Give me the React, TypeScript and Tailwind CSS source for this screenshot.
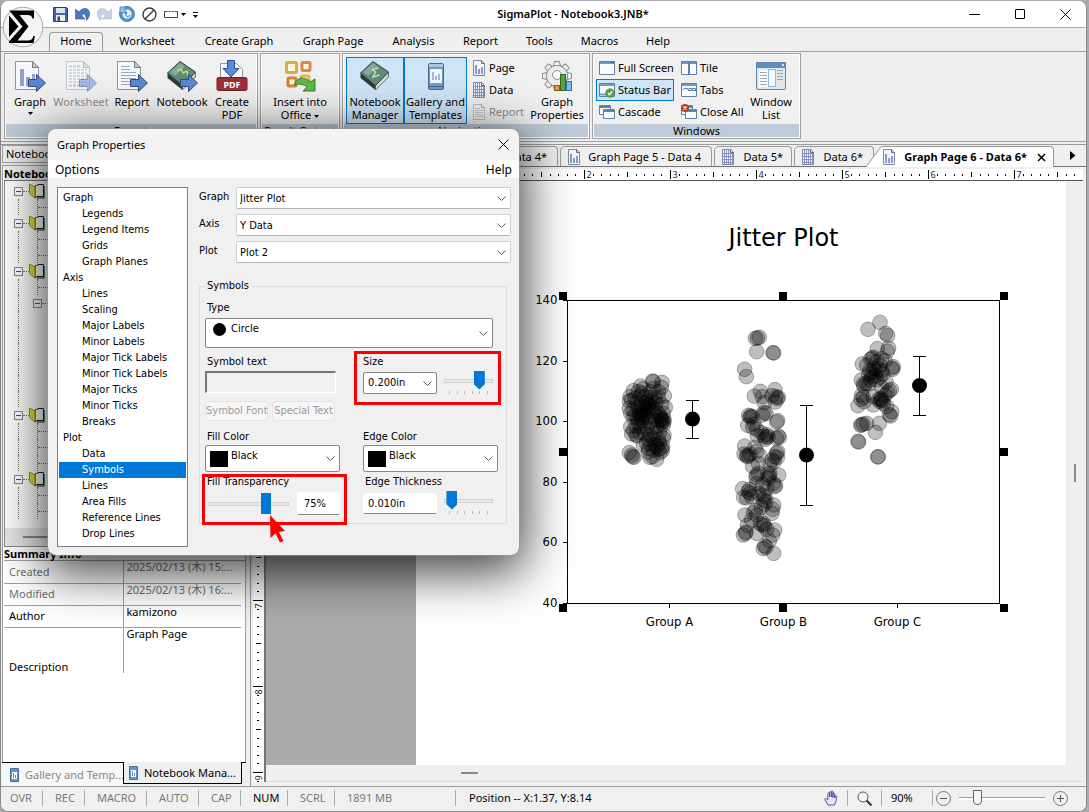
import type { ReactNode } from 'react';

/* ---------- small drawings ---------- */

function Sheet({ kind, faded }: { kind: 'bars' | 'grid' | 'lines'; faded?: boolean }) {
  return (
    <g opacity={faded ? 0.45 : 1}>
      <path d="M1.5 1.5h17l6 6v22h-23z" fill="#f7f8fb" stroke="#8b93a8" />
      <path d="M18.500 1.500v6h6z" fill="#c9cbd2" stroke="#777" />
      {kind === 'bars' && <path d="M6 9h4v17h-4zM12 17h4v9h-4zM18 14h3v12h-3z" fill="#93a1cc" />}
      {kind === 'grid' && (
        <g>
          <path d="M4 5h12v4h6v18h-18z" fill="#a9b2d2" />
          <path d="M4 8.500h18M4 11.500h18M4 14.500h18M4 17.500h18M4 20.500h18M4 23.500h18M7.500 5v22M11.500 5v22M15.500 5v22M19.500 8v19" stroke="#fff" />
        </g>
      )}
      {kind === 'lines' && (
        <path d="M5 6.500h9M5 9.500h9M5 12.500h15M5 15.500h15M5 18.500h15M5 21.500h15M5 24.500h9" stroke="#9aa6c6" />
      )}
    </g>
  );
}

function BlueArrow({ faded }: { faded?: boolean }) {
  return (
    <path
      d="M14.500 19.500h8v-5l9 8.500-9 8.500v-5h-8z"
      fill="#5c87cf"
      stroke="#2c4a80"
      strokeWidth="1"
      opacity={faded ? 0.5 : 1}
      strokeLinejoin="round"
    />
  );
}

function ExportIcon({ kind, faded }: { kind: 'bars' | 'grid' | 'lines'; faded?: boolean }) {
  return (
    <svg className="size-8" viewBox="0 0 32 32" aria-hidden="true">
      <Sheet kind={kind} faded={faded} />
      <BlueArrow faded={faded} />
    </svg>
  );
}

function BookIcon({ arrow }: { arrow?: boolean }) {
  return (
    <svg className="size-8" viewBox="0 0 32 32" aria-hidden="true">
      <path d="M1.500 13l15 12v5l-15-12z" fill="#2b3a36" />
      <path d="M16.500 25l13-13v5l-13 13z" fill="#d4d8d6" stroke="#444" strokeWidth=".7" />
      <path d="M1.500 13L14 1.500l15.500 10.500-13 13.500z" fill="#5f8a76" stroke="#33463f" />
      <path d="M4 12L14 3l5 3.500-10 9.500z" fill="#86a898" />
      {arrow ? (
        <path d="M11 11l4-2 2 4 4-2 1 5" fill="none" stroke="#b8e070" strokeWidth="1.500" />
      ) : (
        <path d="M19.500 8l-6 1.500 3 2.500-2.500 5 6.500-2" fill="none" stroke="#c4dcae" strokeWidth="1.500" />
      )}
      {arrow && <BlueArrow />}
    </svg>
  );
}

function PdfIcon() {
  return (
    <svg className="size-8" viewBox="0 0 32 32" aria-hidden="true">
      <path d="M4.500 3.500h16l6 6v10h-22z" fill="#f7f8fb" stroke="#9098a8" />
      <path d="M11.500 0.500h7v8h4.500l-8 8.500-8-8.500h4.500z" fill="#5a8bd6" stroke="#2c4f90" />
      <rect x="1" y="17.500" width="30" height="13" rx="1.500" fill="#9c3038" stroke="#74212a" />
      <text x="16" y="27.500" textAnchor="middle" fontSize="9" fontWeight="700" fill="#fff">PDF</text>
    </svg>
  );
}

function OfficeIcon() {
  return (
    <svg className="size-8" viewBox="0 0 32 32" aria-hidden="true">
      <g fill="#fff6dc" strokeWidth="3">
        <rect x="2.500" y="2.500" width="10" height="10" rx="1" stroke="#dcae3c" />
        <rect x="18" y="2.500" width="8" height="8" rx="1" stroke="#d98a44" />
        <rect x="4" y="18" width="8" height="8" rx="1" stroke="#dc7e33" />
        <rect x="17" y="16" width="8" height="8" rx="1" stroke="#e3b94a" />
      </g>
      <path d="M10 25c3-8 11-9 16-3l5-3v12h-12l4-4c-4-4-8-3-13-2z" fill="#62b64c" stroke="#33802c" />
    </svg>
  );
}

function PhoneIcon() {
  return (
    <svg className="size-8" viewBox="0 0 32 32" aria-hidden="true">
      <rect x="8.500" y="3.500" width="15" height="26" rx="1.500" fill="#6f9ac4" stroke="#44698f" />
      <rect x="9" y="4" width="14" height="3" fill="#a5c4de" />
      <rect x="10" y="9" width="12" height="14" fill="#f2f6fb" />
      <path d="M12 12h2v8h-2zM15 16h2v4h-2zM18 14h2v6h-2z" fill="#a9b6d8" />
      <path d="M9 26.500h14" stroke="#3f6288" />
    </svg>
  );
}

function GearIcon() {
  const teeth = [0, 45, 90, 135, 180, 225, 270, 315];
  return (
    <svg className="size-8" viewBox="0 0 32 32" aria-hidden="true">
      <g fill="#ececec" stroke="#8c8c8c">
        {teeth.map((a) => (
          <path key={a} d="M12.500 6l1-4.500h5l1 4.500z" transform={`rotate(${a} 16 16)`} />
        ))}
        <circle cx="16" cy="16" r="10.500" />
      </g>
      <circle cx="16" cy="16" r="9.800" fill="#ececec" />
      <circle cx="16" cy="15" r="4.500" fill="#fafafa" stroke="#8c8c8c" />
      <rect x="13.500" y="25.500" width="5" height="5" fill="#d99a4a" stroke="#8c5a20" />
      <rect x="19.500" y="14.500" width="5" height="16" fill="#5ba13f" stroke="#2d6b1e" />
      <rect x="25.500" y="21.500" width="5" height="9" fill="#7db8e6" stroke="#3b76a8" />
    </svg>
  );
}

function WindowListIcon() {
  return (
    <svg className="size-8" viewBox="0 0 32 32" aria-hidden="true">
      <rect x="1.500" y="2.500" width="29" height="27" rx="1.500" fill="#dfe7ef" stroke="#5f86ad" />
      <rect x="1" y="2" width="30" height="6" fill="#5d8dbd" />
      <path d="M27 4h2v2h-2z" fill="#dbe9f5" />
      <rect x="4" y="10" width="17" height="17" fill="#fff" />
      <path d="M5 12.500h7M5 15.500h7M5 18.500h7M5 21.500h7M5 24.500h7M22 10.500h6M22 13.500h6M22 16.500h6M22 19.500h6" stroke="#9aa9b8" />
      <rect x="13.500" y="9.500" width="7" height="17" fill="#f5faff" stroke="#8fbbe0" />
    </svg>
  );
}

function SmallSheet({ kind, faded }: { kind: 'bars' | 'grid' | 'lines'; faded?: boolean }) {
  return (
    <svg className="h-4 w-3.5 flex-none" viewBox="0 0 14 16" aria-hidden="true" opacity={faded ? 0.5 : 1}>
      <path d="M1.500 .5h8l3 3v12h-11z" fill="#f4f6fb" stroke="#7d89a5" />
      <path d="M9.500 .5v3h3" fill="none" stroke="#666" />
      {kind === 'bars' && <path d="M3 5h2v9h-2zM6 9h2v5h-2zM9 7h2v7h-2z" fill="#8c9acb" />}
      {kind === 'grid' && (
        <path d="M3.500 1v14M5.500 1v14M7.500 1v14M9.500 3v12M11.500 4v11M2 4.500h10M2 7.500h10M2 10.500h10M2 13.500h10" stroke="#7e8bc0" strokeWidth=".9" />
      )}
      {kind === 'lines' && <path d="M3 4.500h5M3 6.500h8M3 8.500h8M3 10.500h8M3 12.500h8" stroke="#999" />}
    </svg>
  );
}

type WinKind = 'full' | 'status' | 'cascade' | 'tile' | 'tabs' | 'close';

function WinIcon({ kind }: { kind: WinKind }) {
  return (
    <svg className="size-4 flex-none" viewBox="0 0 16 16" aria-hidden="true">
      {(kind === 'cascade' || kind === 'close') && (
        <g fill="#fbfcfe" stroke="#5c84ab">
          <path d="M.5 1.500h11v9h-11z" />
          <path d="M1 3h10" strokeWidth="2" />
          <path d="M4.500 5.500h11v9h-11z" />
          <path d="M5 7h10" strokeWidth="2" />
        </g>
      )}
      {kind === 'close' && (
        <g>
          <circle cx="4" cy="4" r="4" fill="#b0442c" />
          <path d="M2.500 2.500l3 3m0-3l-3 3" stroke="#fff" strokeWidth="1.200" />
        </g>
      )}
      {(kind === 'full' || kind === 'status' || kind === 'tile' || kind === 'tabs') && (
        <g>
          <path d="M.5 1.500h15v13h-15z" fill="#fbfcfe" stroke="#5c84ab" />
          <path d="M1 3h14" stroke="#6f9ac4" strokeWidth="2" />
        </g>
      )}
      {kind === 'full' && <path d="M12 2.500h1M14 2.500h1" stroke="#1d3f66" />}
      {kind === 'tile' && <path d="M8 2v12" stroke="#5c84ab" strokeWidth="2" />}
      {kind === 'tabs' && <path d="M1 8.500l2-2h4v2M8 8.500v-2h3v2M11.500 8.500v-2h3v2M7 8.500h8" fill="none" stroke="#5c84ab" />}
      {kind === 'status' && (
        <g>
          <path d="M1 12.500h14" stroke="#6f9ac4" strokeWidth="2" />
          <circle cx="11" cy="11" r="4.300" fill="#5ea33b" stroke="#3a7a22" strokeWidth=".6" />
          <path d="M9 11l1.500 1.800 2.700-3.300" fill="none" stroke="#fff" strokeWidth="1.300" />
        </g>
      )}
    </svg>
  );
}

function Logo() {
  return (
    <svg className="size-[42px]" viewBox="0 0 42 42" aria-label="SigmaPlot" role="img">
      <circle cx="21" cy="21" r="19.800" fill="#f4f4f4" stroke="#a8a8a8" />
      <path d="M7 4.500h25v8h-1.500c-.5-2.500-2-3.500-5-3.500H17.500l9 11.500-11 14H26c3 0 4.500-1.500 5.500-4.500H33l-1.500 7H7v-1.500L20.500 20.500 8.500 6z" fill="#000" />
      <path d="M7 9.500v21.500l9.500-10.500z" fill="#000" />
    </svg>
  );
}

function Chevron() {
  return (
    <svg className="pointer-events-none h-[5px] w-[9px]" viewBox="0 0 9 5" aria-hidden="true">
      <path d="M.5 .5l4 4 4-4" fill="none" stroke="#5a5a5a" />
    </svg>
  );
}

function Caret() {
  return (
    <svg className="inline h-[3px] w-[5px] flex-none align-middle" viewBox="0 0 5 3" aria-hidden="true">
      <path d="M0 0h5L2.500 3z" />
    </svg>
  );
}

/* ---------- ribbon ---------- */

function Group({ label, children, className }: { label: string; children: ReactNode; className: string }) {
  return (
    <section className={`flex h-[86px] flex-none flex-col border border-[#a0a0a0] bg-[#f0f0f0] p-px outline-1 -outline-offset-2 outline-white ${className}`}>
      <div className="flex flex-1 pt-0.5">{children}</div>
      <div className="h-3.5 whitespace-nowrap bg-[#bfcbd9] text-center leading-[14px]">{label}</div>
    </section>
  );
}

function BigButton({ icon, lines, width, active, disabled, caret }: {
  icon: ReactNode; lines: string[]; width: string; active?: boolean; disabled?: boolean; caret?: 'below' | 'inline';
}) {
  return (
    <button
      disabled={disabled}
      className={`flex h-[67px] flex-none flex-col items-center whitespace-nowrap border pt-0.5 leading-[13px] ${width} ${
        active ? 'border-[#0078d7] bg-[#cfe4f6]' : 'border-transparent'
      } ${disabled ? 'text-[#8a8a8a]' : ''}`}
    >
      {icon}
      <span className="pt-[3px]">{lines[0]}</span>
      {lines[1] && <span>{lines[1]}{caret === 'inline' && <> <Caret /></>}</span>}
      {caret === 'below' && <span className="flex h-2.5 items-center"><Caret /></span>}
    </button>
  );
}

function SmallButton({ icon, text, active, disabled }: { icon: ReactNode; text: string; active?: boolean; disabled?: boolean }) {
  return (
    <button
      disabled={disabled}
      className={`flex h-[22px] items-center gap-[3px] whitespace-nowrap border px-0.5 ${
        active ? 'border-[#0078d7] bg-[#cfe4f6]' : 'border-transparent'
      } ${disabled ? 'text-[#8a8a8a]' : ''}`}
    >
      {icon}
      {text}
    </button>
  );
}

const menu: [string, string][] = [
  ['Worksheet', 'w-[86px]'], ['Create Graph', 'w-[98px]'], ['Graph Page', 'w-[90px]'], ['Analysis', 'w-[71px]'],
  ['Report', 'w-[63px]'], ['Tools', 'w-[55px]'], ['Macros', 'w-[65px]'], ['Help', 'w-[52px]'],
];

function TitleBar() {
  return (
    <header className="flex h-[27px] flex-none items-center border-b border-[#a8a8a8] bg-white pl-[52px]">
      <div className="flex w-[150px] items-center gap-[7px]">
        <svg className="size-[15px]" viewBox="0 0 15 15" aria-hidden="true">
          <path d="M.5 .5h13l1 1v13h-14z" fill="#4866a4" stroke="#293f70" />
          <rect x="3" y="1" width="9" height="5" fill="#dce4f2" />
          <rect x="3" y="8" width="9" height="6" fill="#e9edf5" />
          <rect x="4.500" y="9.500" width="2.500" height="4.500" fill="#33497a" />
        </svg>
        <svg className="h-[14px] w-[15px]" viewBox="0 0 15 14" aria-hidden="true">
          <path d="M.5 2v10h9.500L7 9c1-3.500 4-3 4.500 4.500C16 9 15.500 2 10.500 1.500 8 1.300 5.500 2.500 4 5z" fill="#4a78bd" stroke="#2b4f8c" strokeWidth=".6" />
        </svg>
        <svg className="h-[14px] w-[15px]" viewBox="0 0 15 14" aria-hidden="true">
          <path d="M14.500 2v10H5L8 9C7 5.500 4 6 3.500 13.500-1 9-.5 2 4.500 1.500 7 1.300 9.500 2.500 11 5z" fill="#c5d3e8" stroke="#a5b7d3" strokeWidth=".6" />
        </svg>
        <svg className="size-4" viewBox="0 0 16 16" aria-hidden="true">
          <circle cx="8" cy="8" r="6" fill="#e8f2fb" stroke="#5b98cd" strokeWidth="3" />
          <circle cx="8" cy="8" r="7.500" fill="none" stroke="#2f6ca8" strokeWidth=".8" />
          <path d="M1 1h7l-2.500 3L8 7H1z" fill="#8fc0e8" stroke="#2f6ca8" strokeWidth=".7" />
          <path d="M7 6v3c0 2 3 2 4 0" fill="none" stroke="#2f6ca8" />
        </svg>
        <svg className="size-[15px]" viewBox="0 0 15 15" aria-hidden="true">
          <circle cx="7.500" cy="7.500" r="6.500" fill="none" stroke="#3c3c3c" strokeWidth="1.400" />
          <path d="M3 12l9-9" stroke="#3c3c3c" strokeWidth="1.400" />
        </svg>
        <svg className="h-[9px] w-[37px]" viewBox="0 0 37 9" aria-hidden="true">
          <path d="M.5 1.500h13v6h-13z" fill="#fff" stroke="#444" />
          <path d="M4 1v1M7 1v1M10 1v1" stroke="#fff" />
          <path d="M17 3h5l-2.500 3z" />
          <path d="M29 2.500h5" stroke="#000" />
          <path d="M29 5h5l-2.500 3z" />
        </svg>
      </div>
      <h1 className="flex-1 pr-2.5 text-center font-semibold">SigmaPlot - Notebook3.JNB*</h1>
      <div className="flex w-[133px] items-center gap-[35px] pl-4">
        <button aria-label="Minimize" className="h-px w-[11px] bg-black" />
        <button aria-label="Maximize" className="size-[10px] rounded-[1px] border border-black" />
        <button aria-label="Close">
          <svg className="size-[11px]" viewBox="0 0 11 11"><path d="M.5 .5l10 10m0-10l-10 10" stroke="#000" /></svg>
        </button>
      </div>
    </header>
  );
}

function Ribbon() {
  return (
    <div className="flex h-[91px] flex-none gap-0.5 border-y border-[#a0a0a0] bg-[#efefef] px-[3px] pt-px">
      <Group label="Export" className="w-[254px]">
        <BigButton icon={<ExportIcon kind="bars" />} lines={['Graph']} width="w-[48px]" caret="below" />
        <BigButton icon={<ExportIcon kind="grid" faded />} lines={['Worksheet']} width="w-[54px]" disabled />
        <BigButton icon={<ExportIcon kind="lines" />} lines={['Report']} width="w-[48px]" />
        <BigButton icon={<BookIcon arrow />} lines={['Notebook']} width="w-[52px]" />
        <BigButton icon={<PdfIcon />} lines={['Create', 'PDF']} width="w-[48px]" />
      </Group>
      <Group label="Result Output" className="w-[80px]">
        <BigButton icon={<OfficeIcon />} lines={['Insert into', 'Office']} width="w-[76px]" caret="inline" />
      </Group>
      <Group label="Navigation" className="w-[248px]">
        <div className="flex pl-0.5">
          <BigButton icon={<BookIcon />} lines={['Notebook', 'Manager']} width="w-[58px]" active />
          <BigButton icon={<PhoneIcon />} lines={['Gallery and', 'Templates']} width="w-[63px]" active />
        </div>
        <div className="flex w-[62px] flex-col pl-0.5">
          <SmallButton icon={<SmallSheet kind="bars" />} text="Page" />
          <SmallButton icon={<SmallSheet kind="grid" />} text="Data" />
          <SmallButton icon={<SmallSheet kind="lines" faded />} text="Report" disabled />
        </div>
        <BigButton icon={<GearIcon />} lines={['Graph', 'Properties']} width="w-[56px]" />
      </Group>
      <Group label="Windows" className="w-[209px]">
        <div className="flex w-[84px] flex-col items-start pl-0.5">
          <SmallButton icon={<WinIcon kind="full" />} text="Full Screen" />
          <SmallButton icon={<WinIcon kind="status" />} text="Status Bar" active />
          <SmallButton icon={<WinIcon kind="cascade" />} text="Cascade" />
        </div>
        <div className="flex w-[66px] flex-col items-start">
          <SmallButton icon={<WinIcon kind="tile" />} text="Tile" />
          <SmallButton icon={<WinIcon kind="tabs" />} text="Tabs" />
          <SmallButton icon={<WinIcon kind="close" />} text="Close All" />
        </div>
        <BigButton icon={<WindowListIcon />} lines={['Window', 'List']} width="w-[54px]" />
      </Group>
    </div>
  );
}

/* ---------- notebook panel ---------- */

type TreeRow = 'book' | 'child' | 'last' | 'sub' | 'gap';
const tree: TreeRow[] = [
  'book', 'last', 'book', 'child', 'last', 'book', 'child', 'sub', 'gap', 'gap', 'gap',
  'gap', 'gap', 'gap', 'book', 'child', 'child', 'last', 'book', 'child', 'last',
];

function Minus() {
  return (
    <span className="flex size-[9px] flex-none items-center justify-center border border-[#8a8a8a] bg-white">
      <span className="h-px w-[5px] bg-[#3a4f9a]" />
    </span>
  );
}

function TreeLine({ kind }: { kind: TreeRow }) {
  return (
    <li className="flex h-4 items-center pl-[9px]">
      {kind === 'book' ? (
        <>
          <Minus />
          <span className="w-[6px] border-t border-dotted border-[#777]" />
          <svg className="size-4 flex-none" viewBox="0 0 16 16" aria-hidden="true">
            <path d="M6 3l4-1.500h4.500v12H8L6 15z" fill="#fff" stroke="#222" />
            <path d="M.5 1l5.500 3v11L.5 10.500z" fill="#e6dd38" stroke="#7a7420" strokeWidth=".8" />
            <path d="M15 3v12H8" fill="none" stroke="#111" />
          </svg>
        </>
      ) : (
        <>
          <span className="ml-1 h-4 w-[19px] flex-none border-l border-dotted border-[#777]" />
          {kind === 'sub' && <span className="-ml-1 flex items-center"><Minus /><span className="w-2 border-t border-dotted border-[#777]" /></span>}
          {(kind === 'child' || kind === 'last') && (
            <span className="h-4 border-l border-dotted border-[#777]"><span className="mt-2 block w-3 border-t border-dotted border-[#777]" /></span>
          )}
        </>
      )}
    </li>
  );
}

const summary = [
  { k: 'Created', v: '2025/02/13 (木) 15:...', h: 'h-[22px]', grey: true },
  { k: 'Modified', v: '2025/02/13 (木) 16:...', h: 'h-[22px]', grey: true },
  { k: 'Author', v: 'kamizono', h: 'h-[22px]' },
  { k: 'Description', v: 'Graph Page', h: 'h-[46px]' },
];

function NotebookPanel() {
  return (
    <aside className="flex w-[244px] flex-none flex-col bg-[#efefef]">
      <div className="flex h-[18px] items-center border border-[#a0a0a0] pl-[3px] leading-4">Notebook Manager</div>
      <div className="mt-0.5 flex flex-1 flex-col border border-b-0 border-[#a0a0a0] bg-white pl-px">
        <div className="flex h-3.5 items-end bg-[#efefef] font-bold leading-[13px]">Notebook3.JNB</div>
        <div className="flex h-[367px] flex-col border border-[#888] border-t-[#777]">
          <ul className="flex-1 pt-0.5">
            {tree.map((kind, i) => <TreeLine key={i} kind={kind} />)}
          </ul>
          <div className="flex h-[18px] items-center bg-[#e6e6e6] pl-[18px]"><span className="h-0.5 w-20 bg-[#888]" /></div>
        </div>
        <div className="flex items-center justify-between border-b border-[#a0a0a0] pr-0.5 font-bold leading-[13px]">
          Summary Info
          <svg className="h-[3px] w-[5px]" viewBox="0 0 5 3" aria-hidden="true"><path d="M0 3h5L2.500 0z" /></svg>
        </div>
        <table className="w-[237px] table-fixed border-collapse leading-[12px]">
          <tbody>
            {summary.map((r) => (
              <tr key={r.k} className={`${r.h} ${r.grey ? 'text-[#6f6f6f]' : ''} border-b border-[#a0a0a0] last:border-b-0`}>
                <th className={`w-[119px] border-r border-[#a0a0a0] p-0 pl-[5px] text-left font-normal ${r.k === 'Description' ? 'align-bottom' : 'align-middle'}`}>{r.k}</th>
                <td className="whitespace-nowrap p-0 pl-[3px] align-top">{r.v}</td>
              </tr>
            ))}
          </tbody>
        </table>
      </div>
      <div className="flex h-6 flex-none border-t border-black">
        <button className="flex w-[121px] items-center gap-1.5 whitespace-nowrap bg-[#f7f7f7] pl-2 text-[#8a8a8a]">
          <TabIcon />Gallery and Temp...
        </button>
        <button className="-mt-px mb-0.5 flex w-[119px] items-center gap-1.5 whitespace-nowrap border-r border-b border-l border-black bg-[#efefef] px-[5px]">
          <TabIcon />Notebook Mana...
        </button>
      </div>
    </aside>
  );
}

function TabIcon() {
  return (
    <svg className="h-[14px] w-[9px] flex-none" viewBox="0 0 9 14" aria-hidden="true">
      <path d="M.5 .5h8v13h-8z" fill="#5d97cf" stroke="#40719f" />
      <path d="M2 4h5v7H2z" fill="#fff" />
      <path d="M3.500 5v5M5.500 7v3" stroke="#6a7dc0" />
    </svg>
  );
}

/* ---------- document area ---------- */

const inch = 86;
const across = Array.from({ length: 79 }, (_, i) => i);
const down = Array.from({ length: 92 }, (_, i) => i);

function HorizontalRuler() {
  return (
    <svg className="h-[11px] w-full flex-none bg-white" aria-hidden="true">
      {across.map((t) => {
        const x = Math.round(146 + (t * inch) / 10) + 0.5;
        const n = t % 10;
        if (n === 0) {
          return (
            <g key={t}>
              <path d={`M${x} 1v9`} stroke="#000" />
              <text x={x + 2} y="9" fontSize="9" fill="#222">{t / 10}</text>
            </g>
          );
        }
        return <path key={t} d={n === 5 ? `M${x} 3v5` : `M${x} 5v2`} stroke="#000" />;
      })}
    </svg>
  );
}

function VerticalRuler() {
  return (
    <svg className="h-full w-[11px] flex-none bg-white" aria-hidden="true">
      {down.map((t) => {
        const y = Math.round(-171 + (t * inch) / 10) + 0.5;
        const n = t % 10;
        if (y < 0) return null;
        if (n === 0) {
          return (
            <g key={t}>
              <path d={`M0 ${y}h10`} stroke="#000" />
              <text transform={`translate(9 ${y + 8}) rotate(-90)`} fontSize="9" fill="#222">{t / 10}</text>
            </g>
          );
        }
        return <path key={t} d={n === 5 ? `M3 ${y}h5` : `M4 ${y}h2`} stroke="#000" />;
      })}
    </svg>
  );
}

/* Jittered samples, in thirds of a pixel from the chart's inner origin. */
const groupA: [number, number][] = [
  [158, 243], [160, 245], [186, 247], [122, 258], [130, 266], [184, 262], [100, 272], [115, 275], [125, 280], [160, 265], [150, 275],
  [175, 275], [193, 288], [90, 290], [95, 300], [88, 303], [105, 295], [120, 290], [135, 290], [150, 292], [165, 292], [176, 292],
  [110, 310], [125, 308], [140, 305], [155, 305], [168, 308], [185, 314], [88, 325], [100, 330], [115, 322], [130, 320], [143, 318],
  [155, 320], [165, 325], [196, 322], [92, 340], [105, 345], [118, 338], [128, 335], [145, 335], [158, 335], [175, 340], [190, 340],
  [100, 352], [112, 355], [122, 352], [140, 352], [180, 350], [185, 355], [192, 358], [188, 362], [178, 362], [165, 358], [115, 365],
  [125, 362], [135, 370], [150, 365], [192, 365], [185, 370], [92, 380], [108, 378], [122, 380], [140, 385], [155, 385], [170, 380],
  [190, 375], [100, 392], [95, 402], [108, 405], [120, 398], [112, 408], [135, 402], [150, 405], [165, 402], [178, 398], [192, 405],
  [145, 418], [158, 415], [175, 418], [190, 415], [130, 435], [140, 430], [152, 432], [165, 435], [178, 430], [188, 438], [145, 445],
  [160, 450], [175, 448], [185, 445], [187, 452], [180, 458], [150, 472], [158, 470], [145, 456], [88, 458], [95, 465], [98, 470],
  [102, 472], [170, 478], [138, 310], [146, 328], [135, 345], [120, 345], [184, 360], [134, 328], [150, 312], [128, 352], [170, 440],
];
const groupB: [number, number][] = [
  [478, 112], [466, 115], [472, 114], [470, 155], [519, 158], [521, 159], [434, 208], [439, 230], [481, 274], [525, 269], [463, 288],
  [487, 290], [528, 290], [532, 296], [535, 292], [516, 287], [526, 306], [493, 308], [452, 348], [446, 346], [456, 350], [450, 352],
  [492, 338], [498, 340], [487, 345], [530, 366], [533, 362], [443, 376], [462, 372], [458, 382], [470, 388], [484, 398], [492, 408],
  [498, 412], [504, 410], [496, 418], [500, 404], [535, 408], [538, 412], [472, 408], [530, 415], [434, 438], [432, 462], [440, 466],
  [446, 468], [450, 462], [441, 470], [470, 455], [465, 442], [478, 465], [530, 460], [524, 470], [533, 455], [522, 485], [516, 480],
  [532, 472], [458, 500], [475, 490], [510, 495], [470, 525], [468, 532], [475, 520], [503, 522], [508, 528], [510, 520], [505, 535],
  [536, 525], [520, 550], [527, 556], [524, 560], [488, 555], [470, 550], [500, 566], [428, 566], [431, 592], [448, 568], [445, 575],
  [455, 590], [450, 580], [440, 594], [475, 580], [495, 590], [490, 600], [498, 604], [494, 612], [490, 585], [521, 615], [518, 628],
  [435, 645], [460, 638], [466, 632], [470, 645], [516, 640], [484, 622], [455, 660], [442, 676], [430, 705], [436, 700], [438, 696],
  [470, 700], [482, 672], [488, 675], [494, 678], [490, 670], [524, 690], [518, 705], [500, 688], [508, 722], [494, 738], [498, 742],
  [490, 746], [521, 760],
];
const groupC: [number, number][] = [
  [840, 67], [804, 88], [857, 100], [863, 107], [832, 146], [866, 144], [862, 154], [816, 174], [812, 178], [820, 172], [845, 176],
  [855, 182], [787, 192], [800, 195], [830, 185], [880, 200], [876, 204], [878, 208], [840, 195], [822, 205], [810, 212], [818, 218],
  [828, 215], [835, 208], [845, 212], [806, 222], [815, 230], [825, 228], [840, 232], [812, 240], [784, 240], [830, 240], [790, 252],
  [798, 250], [806, 252], [792, 258], [848, 222], [858, 245], [874, 268], [868, 272], [862, 278], [855, 285], [845, 262], [785, 285],
  [790, 292], [783, 298], [792, 305], [820, 290], [774, 317], [836, 298], [842, 296], [848, 302], [840, 305], [844, 300], [820, 315],
  [850, 310], [875, 335], [868, 344], [872, 348], [860, 320], [838, 370], [785, 374], [790, 372], [782, 376], [800, 370], [826, 397],
  [776, 426], [774, 424], [833, 471], [835, 470],
];

const yTicks: [string, number][] = [['140', 300], ['120', 361], ['100', 421], ['80', 482], ['60', 542], ['40', 603]];
const xTicks: [string, number][] = [['Group A', 669], ['Group B', 783], ['Group C', 897]];
const bars = [
  { x: 692, top: 400, bottom: 438, mean: 419 },
  { x: 806, top: 405, bottom: 505, mean: 455 },
  { x: 919, top: 356, bottom: 415, mean: 385.5 },
];
const handles = [[563, 296], [783, 296], [1004, 296], [563, 452], [1004, 452], [563, 608], [783, 608], [1004, 608]];

function JitterPlot() {
  return (
    <svg
      className="h-[420px] w-[490px] flex-none font-['DejaVu_Sans_Condensed','DejaVu_Sans',sans-serif]"
      viewBox="530 215 490 420"
      role="img"
      aria-label="Jitter Plot"
    >
      <text x="783.500" y="246" textAnchor="middle" fontSize="24" className="font-['DejaVu_Sans',sans-serif]">Jitter Plot</text>
      <rect x="567.500" y="300.500" width="432" height="303" fill="none" stroke="#000" />
      {yTicks.map(([t, y]) => (
        <g key={t}>
          <path d={`M563 ${y + 0.5}h4`} stroke="#000" />
          <text x="557.500" y={y + 4} textAnchor="end" fontSize="13">{t}</text>
        </g>
      ))}
      {xTicks.map(([t, x]) => (
        <g key={t}>
          <path d={`M${x + 0.5} 604v4`} stroke="#000" />
          <text x={x + 0.5} y="626" textAnchor="middle" fontSize="13">{t}</text>
        </g>
      ))}
      <g transform="translate(600 300) scale(0.33333)" fillOpacity=".25" stroke="#000" strokeOpacity=".35" strokeWidth="2.500">
        {[...groupA, ...groupB, ...groupC].map(([x, y], i) => <circle key={i} cx={x} cy={y} r="22" />)}
      </g>
      {bars.map((b) => (
        <g key={b.x}>
          <path d={`M${b.x - 6} ${b.top + 0.5}h13M${b.x - 6} ${b.bottom + 0.5}h13M${b.x + 0.5} ${b.top}V${b.bottom}`} stroke="#000" />
          <circle cx={b.x + 0.5} cy={b.mean} r="7.500" />
        </g>
      ))}
      {handles.map(([x, y]) => <rect key={`${x}-${y}`} x={x - 4} y={y - 4} width="8" height="8" />)}
    </svg>
  );
}

function DocTab({ kind, text, width }: { kind: 'bars' | 'grid'; text: string; width: string }) {
  return (
    <button className={`flex h-[20px] flex-none items-center justify-between whitespace-nowrap rounded-tl-[5px] rounded-tr-sm border border-b-0 border-[#999] bg-[#efefef] pl-1.5 ${width}`}>
      <SmallSheet kind={kind} />
      {text}
    </button>
  );
}

function DocumentArea() {
  return (
    <main className="flex min-w-0 flex-1 flex-col border-l border-[#999] bg-[#efefef]">
      <div className="flex h-[22px] flex-none items-end gap-0.5 border-b border-[#777]">
        <DocTab kind="grid" text="Data 4*" width="w-[307px] pr-2.5" />
        <DocTab kind="bars" text="Graph Page 5 - Data 4" width="w-[152px] pr-2.5" />
        <DocTab kind="grid" text="Data 5*" width="w-[78px] pr-2" />
        <DocTab kind="grid" text="Data 6*" width="w-[80px] pr-2.5" />
        <div className="-mb-px -ml-2.5 flex h-[21px] flex-none">
          <svg className="h-full w-4" viewBox="0 0 16 21" aria-hidden="true">
            <path d="M0 21L14 2q1-1.500 2-1.500V21z" fill="#fff" />
            <path d="M0 21L14 2q1-1.500 2-1.500" fill="none" stroke="#999" />
          </svg>
          <button className="flex w-[172px] items-center whitespace-nowrap rounded-tr border-t border-r border-[#999] bg-white font-bold">
            <SmallSheet kind="bars" />
            <span className="flex-1 pr-1.5 text-right">Graph Page 6 - Data 6*</span>
            <svg className="mr-[7px] ml-1 size-[9px] flex-none" viewBox="0 0 9 9" aria-hidden="true"><path d="M1 1l7 7m0-7l-7 7" stroke="#000" strokeWidth="1.500" /></svg>
          </button>
        </div>
        <button aria-label="Next tabs" className="flex h-full flex-1 items-center justify-center pl-1">
          <svg className="h-[9px] w-[6px]" viewBox="0 0 6 9"><path d="M0 0l5.500 4.500L0 9z" /></svg>
        </button>
      </div>
      <div className="flex min-h-0 flex-1 pt-0.5 pr-[3px] pb-1 pl-0.5">
        <VerticalRuler />
        <div className="flex min-w-0 flex-1 flex-col border-l-2 border-[#777]">
          <HorizontalRuler />
          <div className="flex min-h-0 flex-1 border-t border-[#555]">
            <div className="flex min-w-0 flex-1 bg-[#ababab] pl-[150px]">
              <div className="flex flex-1 items-start bg-white pt-[34px] pl-[114px]"><JitterPlot /></div>
            </div>
            <div className="flex w-[17px] flex-none flex-col items-center bg-[#efefef] pt-[283px]"><span className="h-[18px] w-0.5 bg-[#888]" /></div>
          </div>
          <div className="flex h-[17px] flex-none items-center border-b border-[#ddd] bg-[#efefef] pl-[195px]"><span className="h-0.5 w-[17px] bg-[#888]" /></div>
        </div>
      </div>
    </main>
  );
}

/* ---------- dialog ---------- */

const nav: [string, string[]][] = [
  ['Graph', ['Legends', 'Legend Items', 'Grids', 'Graph Planes']],
  ['Axis', ['Lines', 'Scaling', 'Major Labels', 'Minor Labels', 'Major Tick Labels', 'Minor Tick Labels', 'Major Ticks', 'Minor Ticks', 'Breaks']],
  ['Plot', ['Data', 'Symbols', 'Lines', 'Area Fills', 'Reference Lines', 'Drop Lines']],
];

function Picker({ id, value, box, text, swatch, chevron = 'pr-1' }: {
  id: string; value: string; box: string; text: string; swatch?: ReactNode; chevron?: string;
}) {
  return (
    <div className={`grid items-center rounded-[2px] border bg-white ${box}`}>
      <select id={id} defaultValue={value} className={`col-start-1 row-start-1 h-full w-full appearance-none bg-transparent outline-none ${text}`}>
        <option>{value}</option>
      </select>
      {swatch && <span className="pointer-events-none col-start-1 row-start-1">{swatch}</span>}
      <span className={`pointer-events-none col-start-1 row-start-1 justify-self-end ${chevron}`}><Chevron /></span>
    </div>
  );
}

const sliderBase =
  'h-[21px] appearance-none bg-transparent [&::-webkit-slider-runnable-track]:h-1 [&::-webkit-slider-runnable-track]:border [&::-webkit-slider-runnable-track]:border-[#d0d3d3] [&::-webkit-slider-runnable-track]:bg-[#e6eaea] [&::-webkit-slider-thumb]:appearance-none [&::-webkit-slider-thumb]:bg-[#0078d7]';
const pointed =
  '[&::-webkit-slider-thumb]:-mt-[9px] [&::-webkit-slider-thumb]:h-[19px] [&::-webkit-slider-thumb]:w-[11px] [&::-webkit-slider-thumb]:[clip-path:polygon(0_0,100%_0,100%_72%,50%_100%,0_72%)]';
const blocky =
  '[&::-webkit-slider-thumb]:-mt-[10px] [&::-webkit-slider-thumb]:h-[21px] [&::-webkit-slider-thumb]:w-[10px]';

function TickSlider({ label, value }: { label: string; value: number }) {
  return (
    <div className="-mt-0.5 flex w-[49px] flex-col">
      <input type="range" aria-label={label} defaultValue={value} className={`${sliderBase} ${pointed} w-full`} />
      <div className="flex justify-between px-[5px]">
        {[0, 1, 2, 3, 4, 5].map((i) => <span key={i} className="h-[3px] w-px bg-[#bbb]" />)}
      </div>
    </div>
  );
}

const field = 'border border-transparent border-b-[#868686] bg-white rounded-[2px] outline-none';

function GraphProperties() {
  const black = <span className="ml-1 block h-4 w-[18px] bg-black" />;
  return (
    <div
      role="dialog"
      aria-label="Graph Properties"
      className="absolute top-[129px] left-[48px] flex w-[471px] flex-col overflow-hidden rounded-lg bg-[#f0f0f0] shadow-[0_12px_50px_5px_rgba(0,0,0,0.76)] outline outline-[#9a9a9a]/60"
    >
      <div className="flex h-[31px] items-center justify-between bg-[#f3f3f3] pr-2.5 pl-[9px]">
        <h2>Graph Properties</h2>
        <button aria-label="Close dialog">
          <svg className="size-[11px]" viewBox="0 0 11 11"><path d="M.5 .5l10 10m0-10l-10 10" stroke="#000" /></svg>
        </button>
      </div>
      <div className="flex h-[18px] items-center justify-between bg-white pr-[7px] pl-[7px] pt-0.5 text-[12px]">
        <button>Options</button>
        <button>Help</button>
      </div>
      <div className="flex gap-[11px] px-2 pt-[9px] pb-2 pl-[9px] font-['DejaVu_Sans_Condensed','DejaVu_Sans',sans-serif]">
        <ul className="w-[131px] flex-none border border-[#7a7f87] bg-white px-px pt-0.5 pb-1 leading-4">
          {nav.map(([head, items]) => (
            <li key={head}>
              <div className="pl-1">{head}</div>
              <ul>
                {items.map((it) => (
                  <li key={it} className={`pl-[23px] ${it === 'Symbols' ? 'bg-[#0078d7] text-white' : ''}`}>{it}</li>
                ))}
              </ul>
            </li>
          ))}
        </ul>
        <div className="flex min-w-0 flex-1 flex-col">
          <div className="grid grid-cols-[37px_1fr] gap-y-[5px] leading-[14px]">
            <label htmlFor="graph" className="pt-[3px]">Graph</label>
            <Picker id="graph" value="Jitter Plot" box="h-[22px] border-[#cfcfcf] border-b-[#b5b5b5]" text="pl-[3px] pt-px" />
            <label htmlFor="axis" className="pt-[3px]">Axis</label>
            <Picker id="axis" value="Y Data" box="h-[22px] border-[#cfcfcf] border-b-[#b5b5b5]" text="pl-[3px] pt-px" />
            <label htmlFor="plot" className="pt-[3px]">Plot</label>
            <Picker id="plot" value="Plot 2" box="h-[22px] border-[#cfcfcf] border-b-[#b5b5b5]" text="pl-[3px] pt-px" />
          </div>
          <fieldset className="relative mt-4 mr-1 border border-[#dcdcdc] pb-2 pl-[5px] leading-[14px]">
            <legend className="px-0.5">Symbols</legend>
            <label htmlFor="type" className="block pt-2 pl-0.5">Type</label>
            <Picker
              id="type" value="Circle" box="mt-[3px] h-[30px] w-[288px] border-[#868686]" text="pl-[25px] pb-2"
              swatch={<span className="mb-2 ml-[7px] block size-[13px] rounded-full bg-black" />}
            />
            <div className="mt-[7px] grid grid-cols-[158px_1fr]">
              <div>
                <label htmlFor="symtext" className="block pl-0.5">Symbol text</label>
                <input id="symtext" disabled className="mt-0.5 h-[22px] w-[131px] border border-t-2 border-l-2 border-white border-t-[#777] border-l-[#777] bg-[#f0f0f0]" />
                <div className="mt-2 flex gap-1 text-[#9a9a9a]">
                  <button disabled className="h-5 w-[63px] whitespace-nowrap rounded border border-[#e4e4e4] bg-[#f6f6f6]">Symbol Font</button>
                  <button disabled className="h-5 w-[63px] whitespace-nowrap rounded border border-[#e4e4e4] bg-[#f6f6f6]">Special Text</button>
                </div>
              </div>
              <div>
                <label htmlFor="size" className="block">Size</label>
                <div className="mt-[3px] flex gap-[7px]">
                  <Picker id="size" value="0.200in" box="h-[22px] w-[74px] border-[#868686]" text="pl-1" />
                  <TickSlider label="Symbol size" value={80} />
                </div>
              </div>
            </div>
            <div className="mt-[9px] grid grid-cols-[158px_1fr]">
              <div>
                <label htmlFor="fill" className="block pl-0.5">Fill Color</label>
                <Picker id="fill" value="Black" box="mt-px h-[27px] w-[135px] border-[#868686]" text="pl-[25px] pb-1.5" swatch={black} />
                <label htmlFor="transparency" className="mt-[3px] block pl-0.5">Fill Transparency</label>
                <div className="mt-[3px] flex items-center gap-2">
                  <input id="transparency" type="range" defaultValue={75} className={`${sliderBase} ${blocky} ml-1 w-[80px]`} />
                  <input aria-label="Fill transparency value" defaultValue="75%" className={`${field} h-[23px] w-[43px] pl-1.5`} />
                </div>
              </div>
              <div>
                <label htmlFor="edge" className="block">Edge Color</label>
                <Picker id="edge" value="Black" box="mt-px h-[27px] w-[135px] border-[#868686]" text="pl-[25px] pb-1.5" swatch={black} />
                <label htmlFor="thickness" className="mt-[3px] block pl-0.5">Edge Thickness</label>
                <div className="mt-[3px] flex gap-[7px]">
                  <input id="thickness" defaultValue="0.010in" className={`${field} mt-px h-[21px] w-[74px] pl-1`} />
                  <TickSlider label="Edge thickness level" value={4} />
                </div>
              </div>
            </div>
            <div className="pointer-events-none absolute top-[58px] left-[154px] h-[54px] w-[147px] border-3 border-[#fa0000]" />
            <div className="pointer-events-none absolute top-[181px] left-[2px] h-[51px] w-[145px] border-3 border-[#fa0000]" />
            <svg className="pointer-events-none absolute top-[222px] left-[70px] h-[28px] w-4" viewBox="0 0 16 28" aria-hidden="true">
              <path d="M0 0l15 16-6 1 4.500 9-3.500 1.500-4.500-9-5 4.500z" fill="#fa0000" />
            </svg>
          </fieldset>
        </div>
      </div>
    </div>
  );
}

/* ---------- status bar ---------- */

const cells: [string, string][] = [
  ['OVR', 'w-[42px] pl-[9px]'], ['REC', 'w-[42px] pl-3'], ['MACRO', 'w-[62px] pl-3'], ['AUTO', 'w-[52px] pl-3'],
  ['CAP', 'w-[42px] pl-3'], ['NUM', 'w-[47px] pl-3'], ['SCRL', 'w-[47px] pl-3'], ['1891 MB', 'w-[121px] pl-3'],
];

function StatusBar() {
  const bar = <span className="h-4 w-px bg-[#aaa]" />;
  const round = 'flex size-[15px] items-center justify-center rounded-full border border-[#777] text-[#555]';
  return (
    <footer className="flex h-[25px] flex-none items-center border-t border-[#999] bg-[#f0f0f0] pb-0.5">
      {cells.map(([t, w]) => (
        <span key={t} className={`h-4 flex-none border-r border-[#aaa] leading-4 ${w} ${t === 'NUM' ? 'text-black' : 'text-[#7a7a7a]'}`}>{t}</span>
      ))}
      <span className="flex-1 pl-[13px]">Position -- X:1.37, Y:8.14</span>
      <div className="flex items-center gap-[9px] pr-[18px]">
        <svg className="h-4 w-3.5" viewBox="0 0 14 16" aria-hidden="true">
          <path d="M4 15L.8 9.500q0-1.500 1.500-1l1.500 1.500V3.500q1-1.500 1.700 0V7 2q1-1.500 1.800 0v5-5.500q1-1 1.700 0V7.500 3q1.200-1 1.700.5V8l.5-2q1.500-.8 1.600.5L12 11l-1.500 4z" fill="#e4e4fa" stroke="#4646a6" strokeWidth=".9" />
        </svg>
        {bar}
        <svg className="size-[15px]" viewBox="0 0 15 15" aria-hidden="true">
          <circle cx="6" cy="6" r="5" fill="#f6f6f6" stroke="#555" /><path d="M9.500 9.500l5 5" stroke="#333" strokeWidth="2" />
        </svg>
        {bar}
        <span className="w-[32px]">90%</span>
        {bar}
        <div className="-ml-1.5 flex items-center gap-2">
          <button aria-label="Zoom out" className={round}><span className="h-px w-[7px] bg-current" /></button>
          <input
            type="range" aria-label="Zoom" defaultValue={18}
            className="h-5 w-[86px] appearance-none bg-transparent [&::-webkit-slider-runnable-track]:h-[3px] [&::-webkit-slider-runnable-track]:border-t [&::-webkit-slider-runnable-track]:border-[#999] [&::-webkit-slider-runnable-track]:bg-white [&::-webkit-slider-thumb]:-mt-[8px] [&::-webkit-slider-thumb]:h-[15px] [&::-webkit-slider-thumb]:w-[9px] [&::-webkit-slider-thumb]:appearance-none [&::-webkit-slider-thumb]:rounded-b-[4px] [&::-webkit-slider-thumb]:border [&::-webkit-slider-thumb]:border-[#666] [&::-webkit-slider-thumb]:bg-[#f4f4f4]"
          />
          <button aria-label="Zoom in" className={round}>
            <svg className="size-[7px]" viewBox="0 0 7 7"><path d="M0 3.500h7M3.500 0v7" stroke="#555" /></svg>
          </button>
        </div>
      </div>
    </footer>
  );
}

export default function App() {
  return (
    <div className="relative flex h-screen min-h-[600px] w-full flex-col overflow-hidden bg-[#a8abb0] pt-px pr-0.5 font-['Noto_Sans','Noto_Sans_CJK_JP',sans-serif] text-[11px] leading-4 text-black">
      <div className="flex min-h-0 flex-1 flex-col overflow-hidden rounded-lg border-x border-b border-[#888] bg-[#efefef]">
        <TitleBar />
        <nav className="flex h-[23px] flex-none items-end pl-[48px]">
          <button className="-mb-px mr-px h-5 w-[54px] rounded-t border border-b-0 border-[#999] bg-[#f0f0f0] pb-[3px]">Home</button>
          {menu.map(([t, w]) => (
            <button key={t} className={`h-5 flex-none whitespace-nowrap ${w}`}>{t}</button>
          ))}
        </nav>
        <Ribbon />
        <div className="mt-0.5 flex min-h-0 flex-1 gap-1 border-t border-[#999] pl-px">
          <NotebookPanel />
          <DocumentArea />
        </div>
        <StatusBar />
      </div>
      <div className="absolute top-1.5 left-[2px]"><Logo /></div>
      <GraphProperties />
    </div>
  );
}
